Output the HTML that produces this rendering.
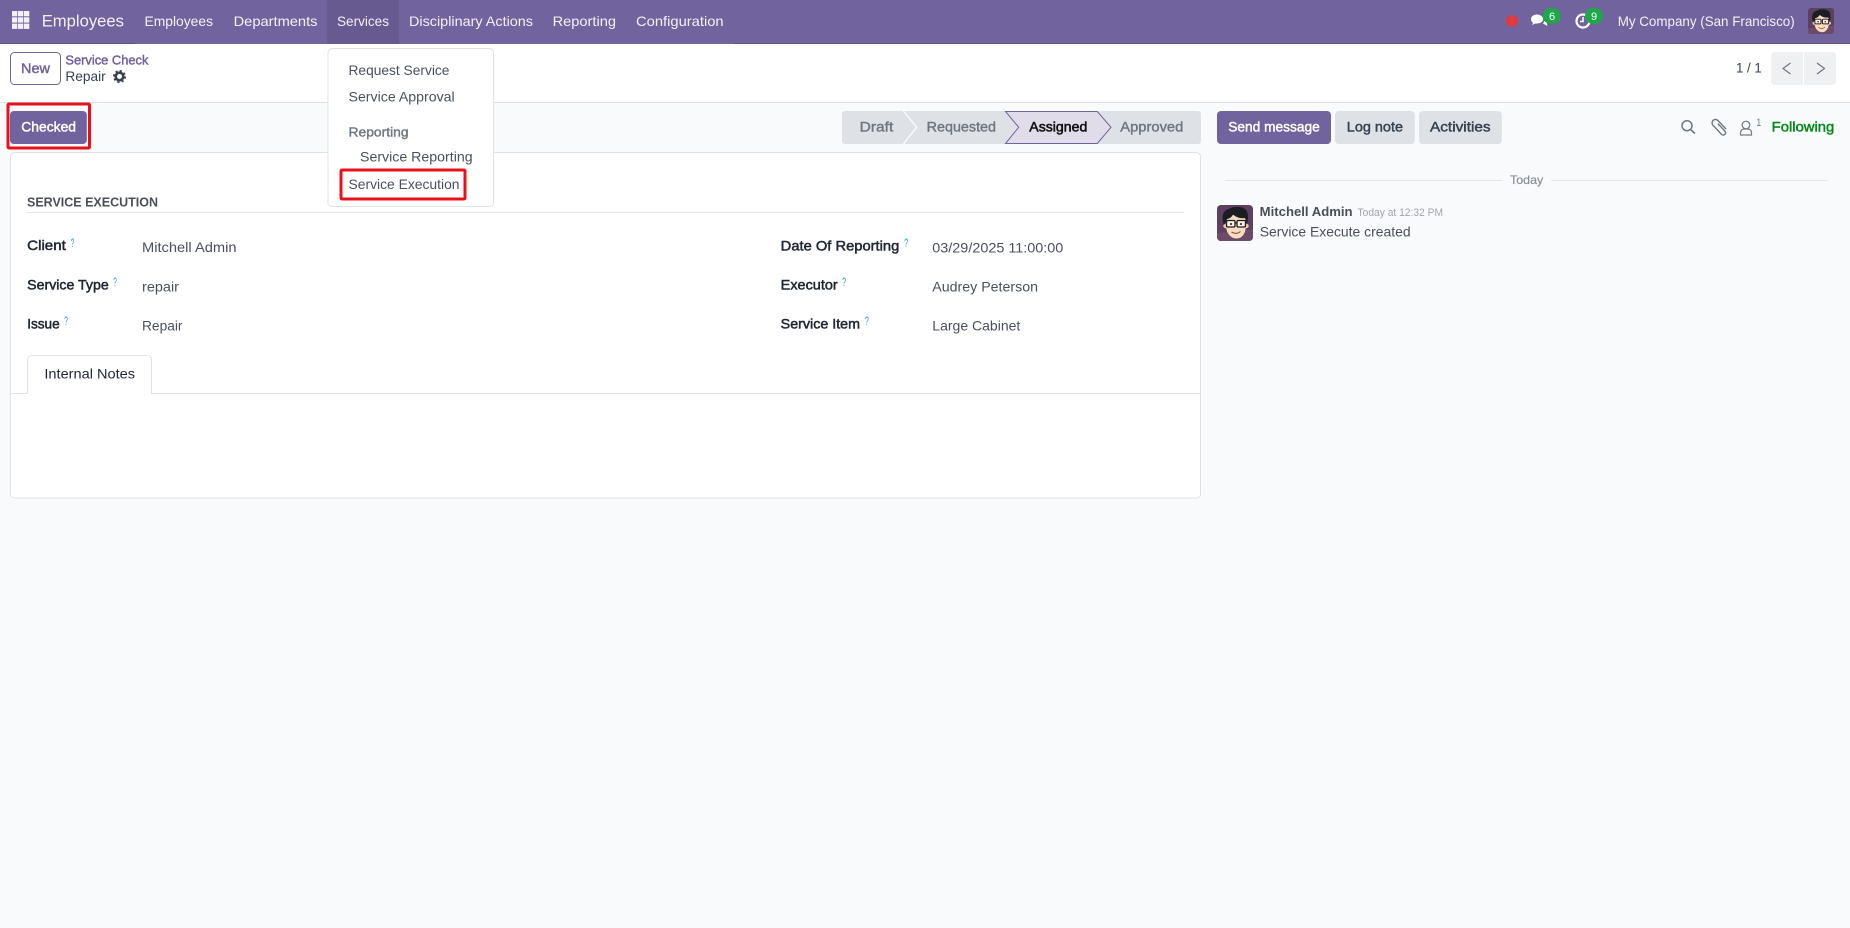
<!DOCTYPE html>
<html lang="en"><head><meta charset="utf-8"><title>Service Check - Repair</title>
<style>
html,body{margin:0;padding:0;background:#f9fafb;width:1850px;height:928px;overflow:hidden}
svg{display:block}
text{font-family:"Liberation Sans",sans-serif;font-size:14px;fill:#4a505a;white-space:pre}
.n{fill:#f3f1f7}
.m{stroke:currentColor;stroke-width:.45px}
.l{fill:#1f2630;stroke:#1f2630;stroke-width:.5px}
.q{fill:#17a2c4;font-size:12px}
.s{fill:#6f757e;stroke:#6f757e;stroke-width:.4px}
.b{stroke-width:.45px;stroke:#374151;fill:#374151}
</style></head><body>
<svg width="1850" height="928" viewBox="0 0 1850 928" xmlns="http://www.w3.org/2000/svg">
<defs>
<symbol id="av" viewBox="0 0 36 36">
<rect width="36" height="36" rx="4" fill="#5d3f5f"/>
<path d="M0 28 L36 24 V32 a4 4 0 0 1 -4 4 H4 a4 4 0 0 1 -4 -4Z" fill="#6d4a68"/>
<circle cx="8.500" cy="21" r="2.200" fill="#f3cba6"/>
<circle cx="29.500" cy="21" r="2.200" fill="#f3cba6"/>
<path d="M9 17 C8 27 13 33.500 19.500 33.500 C26 33.500 29.500 27 29 17 L27 10 H11Z" fill="#f9dcc0"/>
<path d="M7 20 C4 12 6 5 12 4 C16 1 24 1 28 4 C31 6 32 12 30 19 L28.500 13 C23 14 19 12 16 9.500 C15 12 12 14 10 14Z" fill="#1c1d22"/>
<rect x="9.500" y="15.500" width="8.500" height="6.500" rx="1.200" fill="#fff" fill-opacity=".45" stroke="#1c1d22" stroke-width="1.300"/>
<rect x="20" y="15.500" width="8.500" height="6.500" rx="1.200" fill="#fff" fill-opacity=".45" stroke="#1c1d22" stroke-width="1.300"/>
<path d="M18 18h2" stroke="#1c1d22" stroke-width="1.200"/>
<circle cx="14" cy="19" r="1" fill="#1c1d22"/><circle cx="24" cy="19" r="1" fill="#1c1d22"/>
<path d="M14.500 27 q5 3 9-.5" fill="none" stroke="#8a4f3a" stroke-width="1.100"/>
</symbol>
</defs>

<!-- navbar -->
<rect width="1850" height="44" fill="#71639e"/>
<rect y="43" width="135" height="1" fill="#5f5388"/>
<rect x="734" y="43" width="1116" height="1" fill="#5f5388"/>
<rect x="327" width="72" height="44" fill="#665a90"/>
<g fill="#f3f1f7">
<rect x="12" y="11" width="5.300" height="5.300"/><rect x="18" y="11" width="5.300" height="5.300"/><rect x="24" y="11" width="5.300" height="5.300"/>
<rect x="12" y="17.300" width="5.300" height="5.300"/><rect x="18" y="17.300" width="5.300" height="5.300"/><rect x="24" y="17.300" width="5.300" height="5.300"/>
<rect x="12" y="23.600" width="5.300" height="5.300"/><rect x="18" y="23.600" width="5.300" height="5.300"/><rect x="24" y="23.600" width="5.300" height="5.300"/>
</g>
<text class="n" x="41.700" y="26.500" style="font-size:17px" textLength="82.300" lengthAdjust="spacingAndGlyphs">Employees</text>
<text class="n" x="144.500" y="26" textLength="68.500" lengthAdjust="spacingAndGlyphs">Employees</text>
<text class="n" x="233.600" y="26" textLength="83.900" lengthAdjust="spacingAndGlyphs">Departments</text>
<text class="n" x="337" y="26" textLength="52" lengthAdjust="spacingAndGlyphs">Services</text>
<text class="n" x="409" y="26" textLength="124" lengthAdjust="spacingAndGlyphs">Disciplinary Actions</text>
<text class="n" x="552.600" y="26" textLength="63.400" lengthAdjust="spacingAndGlyphs">Reporting</text>
<text class="n" x="636" y="26" textLength="87.600" lengthAdjust="spacingAndGlyphs">Configuration</text>

<circle cx="1512" cy="21" r="6" fill="#dc3c3f"/>
<path d="M1537 14.500c-3.400 0-6 2-6 4.600 0 1.500.8 2.700 2 3.500l-.9 2.400 3-1.500h2c3.400 0 6-2 6-4.400s-2.700-4.600-6.100-4.600z" fill="#fff"/>
<path d="M1543 23.500l4.500 2.500-.8-2.600c.9-.6 1.300-1.400 1.300-2.300l-3-1z" fill="#fff"/>
<rect x="1542.700" y="8" width="18" height="16" rx="8" fill="#1fa84a"/>
<text x="1552" y="20" text-anchor="middle" style="font-size:11px;fill:#fff">6</text>
<circle cx="1583" cy="21" r="6.500" fill="none" stroke="#fff" stroke-width="2.200"/>
<path d="M1583 17v4.500h-3" fill="none" stroke="#fff" stroke-width="1.600"/>
<rect x="1585" y="8" width="18" height="16" rx="8" fill="#1fa84a"/>
<text x="1594" y="20" text-anchor="middle" style="font-size:11px;fill:#fff">9</text>
<text class="n" x="1617.700" y="26" textLength="177" lengthAdjust="spacingAndGlyphs">My Company (San Francisco)</text>
<use href="#av" x="1808" y="8" width="26" height="26"/>

<!-- control panel -->
<rect y="44" width="1850" height="58" fill="#fff"/>
<rect y="102" width="1850" height="1" fill="#dee2e6"/>
<rect x="10.500" y="52.500" width="50" height="32" rx="4" fill="#fff" stroke="#71639e"/>
<text class="m" x="21" y="73" style="fill:#71639e;color:#71639e" textLength="29" lengthAdjust="spacingAndGlyphs">New</text>
<text class="m" x="65.400" y="64.700" style="font-size:13px;fill:#71639e;color:#71639e" textLength="83" lengthAdjust="spacingAndGlyphs">Service Check</text>
<text x="65.400" y="81" style="fill:#374151" textLength="40.300" lengthAdjust="spacingAndGlyphs">Repair</text>
<circle cx="119.500" cy="76.500" r="3.800" fill="none" stroke="#374151" stroke-width="2.600"/>
<circle cx="119.500" cy="76.500" r="5.600" fill="none" stroke="#374151" stroke-width="1.800" stroke-dasharray="2.200 2.200"/>
<text x="1736" y="72.700" style="fill:#374151" textLength="25.800" lengthAdjust="spacingAndGlyphs">1 / 1</text>
<rect x="1771" y="52" width="65" height="33" rx="4" fill="#eff0f2"/>
<rect x="1803" y="52" width="1" height="33" fill="#fff"/>
<path d="M1790.500 63l-7.500 5.500 7.500 5.500M1817 63l7.500 5.500-7.500 5.500" fill="none" stroke="#6a7079" stroke-width="1.100"/>

<!-- form sheet -->
<rect x="10.500" y="152.500" width="1190" height="345.500" rx="4" fill="#fff" stroke="#dee2e6"/>
<text x="27" y="206.300" style="font-size:13px;font-weight:700;fill:#4a4f57" textLength="131" lengthAdjust="spacingAndGlyphs">SERVICE EXECUTION</text>
<rect x="27" y="212" width="1157" height="1" fill="#e3e5e9"/>

<text class="l" x="27.200" y="250" textLength="38.600" lengthAdjust="spacingAndGlyphs">Client</text>
<text class="q" x="70.700" y="247" textLength="3.600" lengthAdjust="spacingAndGlyphs">?</text>
<text x="142" y="252" textLength="94.500" lengthAdjust="spacingAndGlyphs">Mitchell Admin</text>
<text class="l" x="27.200" y="289.300" textLength="81.500" lengthAdjust="spacingAndGlyphs">Service Type</text>
<text class="q" x="113.200" y="286" textLength="3.600" lengthAdjust="spacingAndGlyphs">?</text>
<text x="142" y="291.300" textLength="37" lengthAdjust="spacingAndGlyphs">repair</text>
<text class="l" x="27.200" y="328.300" textLength="32.500" lengthAdjust="spacingAndGlyphs">Issue</text>
<text class="q" x="64.200" y="325" textLength="3.600" lengthAdjust="spacingAndGlyphs">?</text>
<text x="142" y="330.300" textLength="40.500" lengthAdjust="spacingAndGlyphs">Repair</text>

<text class="l" x="780.700" y="250.500" textLength="118.600" lengthAdjust="spacingAndGlyphs">Date Of Reporting</text>
<text class="q" x="904.300" y="247" textLength="3.800" lengthAdjust="spacingAndGlyphs">?</text>
<text x="932.300" y="252.500" textLength="131" lengthAdjust="spacingAndGlyphs">03/29/2025 11:00:00</text>
<text class="l" x="780.700" y="289.500" textLength="57" lengthAdjust="spacingAndGlyphs">Executor</text>
<text class="q" x="842.300" y="286" textLength="3.800" lengthAdjust="spacingAndGlyphs">?</text>
<text x="932.300" y="291.500" textLength="105.700" lengthAdjust="spacingAndGlyphs">Audrey Peterson</text>
<text class="l" x="780.700" y="328.500" textLength="79.300" lengthAdjust="spacingAndGlyphs">Service Item</text>
<text class="q" x="865" y="325" textLength="3.800" lengthAdjust="spacingAndGlyphs">?</text>
<text x="932.300" y="330.500" textLength="88" lengthAdjust="spacingAndGlyphs">Large Cabinet</text>

<rect x="11" y="393" width="1189" height="1" fill="#dee2e6"/>
<path d="M27.500 394V359.500a4 4 0 0 1 4-4H147.500a4 4 0 0 1 4 4V394" fill="#fff" stroke="#dee2e6"/>
<text x="44.400" y="378.300" style="fill:#1f2630" textLength="90.600" lengthAdjust="spacingAndGlyphs">Internal Notes</text>

<!-- action button -->
<rect x="10" y="111" width="76.800" height="33" rx="4" fill="#71639e"/>
<text class="m" x="21.300" y="131.700" style="fill:#fff;color:#fff" textLength="54.700" lengthAdjust="spacingAndGlyphs">Checked</text>
<rect x="8" y="104" width="81.500" height="44" rx="1" fill="none" stroke="#e8111b" stroke-width="3"/>

<!-- statusbar -->
<rect x="842" y="111" width="359" height="33" rx="3" fill="#dee2e6"/>
<path d="M903.300 111L916.700 127.300L903.300 144" fill="none" stroke="#fff" stroke-width="1.200"/>
<path d="M1005.500 111.500H1097.300L1111 127.300L1097.300 143.500H1005.500L1018.700 127.300Z" fill="#e0dcea" stroke="#71639e"/>
<text class="s" x="859.700" y="131.700" textLength="33.600" lengthAdjust="spacingAndGlyphs">Draft</text>
<text class="s" x="926.700" y="131.700" textLength="69.300" lengthAdjust="spacingAndGlyphs">Requested</text>
<text x="1029.300" y="131.700" style="fill:#111;stroke:#111;stroke-width:.55px" textLength="58" lengthAdjust="spacingAndGlyphs">Assigned</text>
<text class="s" x="1120.300" y="131.700" textLength="63" lengthAdjust="spacingAndGlyphs">Approved</text>

<!-- dropdown -->
<rect x="328" y="48.500" width="165.500" height="158" rx="4" fill="#fff" stroke="#dee2e6"/>
<text x="348.500" y="75" textLength="100.900" lengthAdjust="spacingAndGlyphs">Request Service</text>
<text x="348.500" y="101.500" textLength="106.200" lengthAdjust="spacingAndGlyphs">Service Approval</text>
<text class="s" x="348.500" y="136.300" style="font-size:13px" textLength="60.100" lengthAdjust="spacingAndGlyphs">Reporting</text>
<text x="360" y="161.500" textLength="112.600" lengthAdjust="spacingAndGlyphs">Service Reporting</text>
<text x="348.500" y="189" textLength="111" lengthAdjust="spacingAndGlyphs">Service Execution</text>
<rect x="341" y="170" width="124" height="29" rx="1" fill="none" stroke="#e8111b" stroke-width="3"/>

<!-- chatter -->
<rect x="1217" y="111" width="114" height="33" rx="4" fill="#71639e"/>
<text class="m" x="1228.200" y="131.700" style="fill:#fff;color:#fff" textLength="91.600" lengthAdjust="spacingAndGlyphs">Send message</text>
<rect x="1335" y="111" width="79.800" height="33" rx="4" fill="#dee2e6"/>
<text class="b" x="1346.800" y="131.700" textLength="56.200" lengthAdjust="spacingAndGlyphs">Log note</text>
<rect x="1419" y="111" width="82.800" height="33" rx="4" fill="#dee2e6"/>
<text class="b" x="1430" y="131.700" textLength="60.600" lengthAdjust="spacingAndGlyphs">Activities</text>

<circle cx="1687" cy="125.700" r="5" fill="none" stroke="#6b7683" stroke-width="1.500"/>
<path d="M1690.500 129.500l4.500 4" stroke="#6b7683" stroke-width="1.700"/>
<path d="M1726 129l-8-8.500a3.400 3.400 0 0 0-5 4.800l8.500 9a2.300 2.300 0 0 0 3.400-3.200l-7-7.500" fill="none" stroke="#6b7683" stroke-width="1.400"/>
<circle cx="1746" cy="125" r="3.800" fill="none" stroke="#6f7680" stroke-width="1.200"/>
<path d="M1740.500 135v-2.500a3.500 3.500 0 0 1 3.500-3.500h4a3.500 3.500 0 0 1 3.500 3.500v2.500z" fill="none" stroke="#7b7a80" stroke-width="1.200"/>
<text x="1756.400" y="126" style="font-size:11px;fill:#6b7683" textLength="4.800" lengthAdjust="spacingAndGlyphs">1</text>
<text class="m" x="1771.700" y="131.700" style="fill:#008818;color:#008818" textLength="62.600" lengthAdjust="spacingAndGlyphs">Following</text>

<rect x="1225" y="180" width="277" height="1" fill="#e3e5e9"/>
<rect x="1551" y="180" width="277" height="1" fill="#e3e5e9"/>
<text class="s" x="1510" y="184" style="font-size:12px;fill:#8b9096;stroke:#8b9096;stroke-width:.2px" textLength="33.300" lengthAdjust="spacingAndGlyphs">Today</text>
<use href="#av" x="1217" y="205" width="36" height="36"/>
<text x="1259.700" y="216" style="font-size:13px;font-weight:700;fill:#4a4f57" textLength="92.900" lengthAdjust="spacingAndGlyphs">Mitchell Admin</text>
<text x="1357.500" y="216" style="font-size:11px;fill:#a0a4aa" textLength="85.500" lengthAdjust="spacingAndGlyphs">Today at 12:32 PM</text>
<text x="1259.700" y="236.700" textLength="150.900" lengthAdjust="spacingAndGlyphs">Service Execute created</text>
</svg>
</body></html>
